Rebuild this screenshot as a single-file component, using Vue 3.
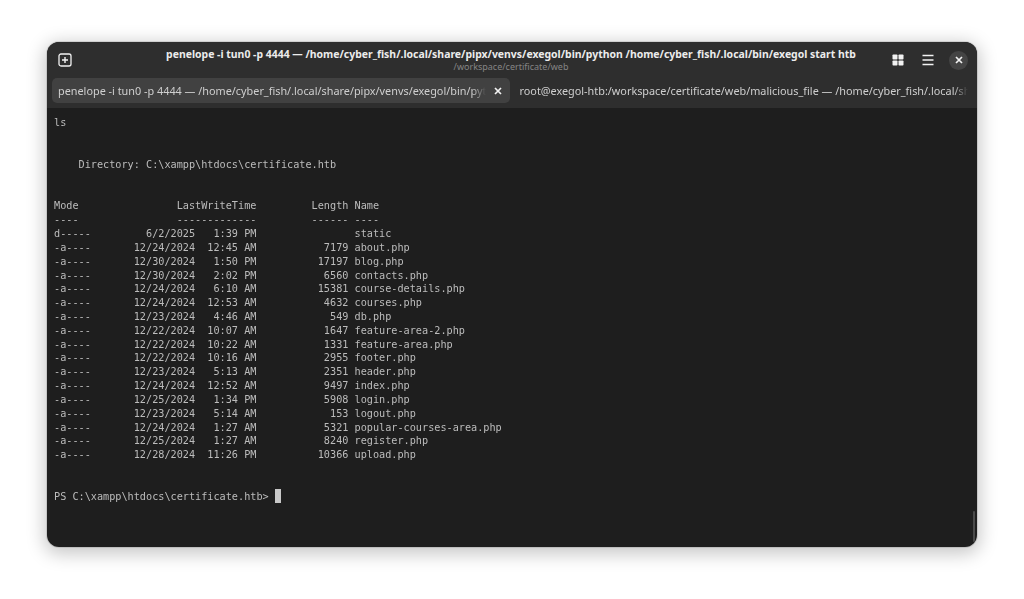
<script setup>
const files = [
  ['d-----', '6/2/2025', '1:39 PM', '', 'static'],
  ['-a----', '12/24/2024', '12:45 AM', '7179', 'about.php'],
  ['-a----', '12/30/2024', '1:50 PM', '17197', 'blog.php'],
  ['-a----', '12/30/2024', '2:02 PM', '6560', 'contacts.php'],
  ['-a----', '12/24/2024', '6:10 AM', '15381', 'course-details.php'],
  ['-a----', '12/24/2024', '12:53 AM', '4632', 'courses.php'],
  ['-a----', '12/23/2024', '4:46 AM', '549', 'db.php'],
  ['-a----', '12/22/2024', '10:07 AM', '1647', 'feature-area-2.php'],
  ['-a----', '12/22/2024', '10:22 AM', '1331', 'feature-area.php'],
  ['-a----', '12/22/2024', '10:16 AM', '2955', 'footer.php'],
  ['-a----', '12/23/2024', '5:13 AM', '2351', 'header.php'],
  ['-a----', '12/24/2024', '12:52 AM', '9497', 'index.php'],
  ['-a----', '12/25/2024', '1:34 PM', '5908', 'login.php'],
  ['-a----', '12/23/2024', '5:14 AM', '153', 'logout.php'],
  ['-a----', '12/24/2024', '1:27 AM', '5321', 'popular-courses-area.php'],
  ['-a----', '12/25/2024', '1:27 AM', '8240', 'register.php'],
  ['-a----', '12/28/2024', '11:26 PM', '10366', 'upload.php'],
]
const rows = files.map(([m, d, t, l, n]) =>
  m + d.padStart(17) + t.padStart(10) + l.padStart(15) + ' ' + n
)
const output = [
  'ls',
  '',
  '',
  '    Directory: C:\\xampp\\htdocs\\certificate.htb',
  '',
  '',
  'Mode' + ' '.repeat(16) + 'LastWriteTime' + ' '.repeat(9) + 'Length Name',
  '----' + ' '.repeat(16) + '-------------' + ' '.repeat(9) + '------ ----',
  ...rows,
  '',
  '',
  '',
].join('\n')
</script>

<template>
  <div class="desktop">
    <main class="window">
      <header class="headerbar">
        <div class="titlebar">
          <div class="side">
            <button class="icon-btn new-tab" aria-label="New tab">
              <svg width="14" height="14" viewBox="0 0 14 14" fill="none" stroke="#f2f2f2">
                <rect x="1" y="1" width="12" height="12" rx="2" stroke-width="1.3" />
                <path d="M7 4v6M4 7h6" stroke-width="1.4" />
              </svg>
            </button>
          </div>
          <div class="titles">
            <div class="title">penelope -i tun0 -p 4444 — /home/cyber_fish/.local/share/pipx/venvs/exegol/bin/python /home/cyber_fish/.local/bin/exegol start htb</div>
            <div class="subtitle">/workspace/certificate/web</div>
          </div>
          <div class="side actions">
            <button class="icon-btn" aria-label="Overview">
              <svg width="12" height="12" viewBox="0 0 12 12" fill="#f2f2f2">
                <rect x="0.5" y="0.5" width="5" height="5" rx="0.8" />
                <rect x="6.5" y="0.5" width="5" height="5" rx="0.8" />
                <rect x="0.5" y="6.5" width="5" height="5" rx="0.8" />
                <rect x="6.5" y="6.5" width="5" height="5" rx="0.8" />
              </svg>
            </button>
            <button class="icon-btn" aria-label="Menu">
              <svg width="12" height="12" viewBox="0 0 12 12" fill="none" stroke="#f2f2f2" stroke-width="1.5">
                <path d="M0.5 1.5h11M0.5 6h11M0.5 10.5h11" />
              </svg>
            </button>
            <button class="icon-btn close-btn" aria-label="Close">
              <svg width="8" height="8" viewBox="0 0 8 8" fill="none" stroke="#f2f2f2" stroke-width="1.7">
                <path d="M1 1l6 6M7 1l-6 6" />
              </svg>
            </button>
          </div>
        </div>
        <div class="tabbar">
          <div class="tab active">
            <span class="tab-label">penelope -i tun0 -p 4444 — /home/cyber_fish/.local/share/pipx/venvs/exegol/bin/python</span>
            <svg class="tab-close" width="8" height="8" viewBox="0 0 8 8" fill="none" stroke="#f2f2f2" stroke-width="1.7">
              <path d="M1 1l6 6M7 1l-6 6" />
            </svg>
          </div>
          <div class="tab">
            <span class="tab-label">root@exegol-htb:/workspace/certificate/web/malicious_file — /home/cyber_fish/.local/share/pipx</span>
          </div>
        </div>
      </header>
      <section class="terminal">
        <pre class="output">{{ output }}PS C:\xampp\htdocs\certificate.htb&gt; <span class="cursor"></span></pre>
        <div class="scroll-thumb"></div>
      </section>
    </main>
  </div>
</template>

<style>
html, body { margin: 0; background: #fff; overflow: hidden; }
</style>

<style scoped>
.desktop {
  width: 1024px;
  height: 599px;
  box-sizing: border-box;
  padding: 42px 47px 52px;
  display: flex;
  background: #fff;
}
.window {
  flex: 1;
  min-width: 0;
  display: flex;
  flex-direction: column;
  border-radius: 12px;
  overflow: hidden;
  background: #1e1e1e;
  box-shadow: 0 4px 18px 3px rgba(0, 0, 0, 0.22), 0 0 0 1px rgba(0, 0, 0, 0.1);
}
.headerbar {
  height: 66px;
  flex: none;
  background: #2e2e2e;
  display: flex;
  flex-direction: column;
  padding: 0 5px;
  box-sizing: border-box;
}
.titlebar {
  height: 36px;
  flex: none;
  display: flex;
  align-items: center;
  padding: 0 4px 0 2px;
}
.side {
  flex: 1 1 0;
  min-width: 0;
  display: flex;
  align-items: center;
}
.icon-btn {
  border: 0;
  padding: 0;
  background: none;
  width: 14px;
  height: 14px;
  display: flex;
  align-items: center;
  justify-content: center;
}
.new-tab {
  margin-left: 4px;
}
.titles {
  flex: none;
  text-align: center;
}
.title {
  color: #ececec;
  font: 700 10.44px/14px "Noto Sans", sans-serif;
  white-space: nowrap;
}
.subtitle {
  color: #858585;
  font: 400 9px/12px "Noto Sans", sans-serif;
  white-space: nowrap;
}
.actions {
  justify-content: flex-end;
  gap: 16px;
}
.close-btn {
  width: 19px;
  height: 19px;
  margin-left: -2px;
  border-radius: 50%;
  background: #444;
}
.tabbar {
  height: 25px;
  flex: none;
  display: flex;
  gap: 5px;
}
.tab {
  flex: 1 1 0;
  min-width: 0;
  display: flex;
  align-items: center;
  padding: 0 6px;
  border-radius: 5px;
  color: #cfcfcf;
}
.tab.active {
  background: #414141;
}
.tab-label {
  flex: 1;
  min-width: 0;
  overflow: hidden;
  white-space: nowrap;
  font: 400 10.85px/25px "Noto Sans", sans-serif;
  -webkit-mask-image: linear-gradient(to left, transparent, #000 14px);
  mask-image: linear-gradient(to left, transparent, #000 14px);
}
.tab:not(.active) .tab-label {
  margin-left: -1px;
  margin-right: -2px;
}
.tab-close {
  flex: none;
  margin: 0 2px 0 8px;
}
.terminal {
  flex: 1;
  min-height: 0;
  position: relative;
  padding: 8.4px 7px 0;
}
.output {
  margin: 0;
  color: #bcbcbc;
  font: 400 10.2px/13.834px "DejaVu Sans Mono", monospace;
  will-change: opacity;
}
.cursor {
  display: inline-block;
  width: 6px;
  height: 14px;
  margin-top: -2px;
  background: #c8c8c8;
  vertical-align: -3px;
}
.scroll-thumb {
  position: absolute;
  right: 2px;
  bottom: 5px;
  width: 2px;
  height: 31px;
  border-radius: 1px;
  background: #4a4a4a;
}
</style>
